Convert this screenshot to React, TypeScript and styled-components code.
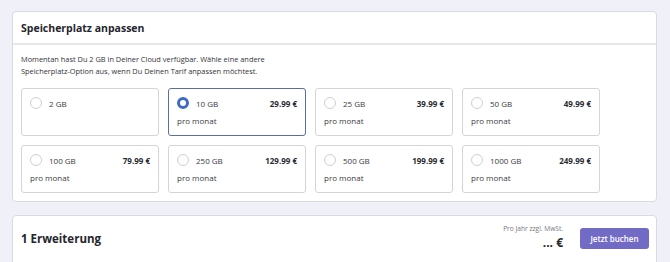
import React, { useState } from 'react';
import styled, { createGlobalStyle } from 'styled-components';

const GlobalStyle = createGlobalStyle`
  body {
    margin: 0;
    background: #f0f0f8;
    font-family: 'Open Sans', 'Liberation Sans', sans-serif;
    color: #2b2b33;
  }
`;

const Page = styled.div`
  padding: 11px 13px 0 12px;
  display: flex;
  flex-direction: column;
  gap: 13px;
`;

const Card = styled.div`
  background: #fff;
  border: 1px solid #d9d9e3;
  border-radius: 4px;
`;

const CardHeader = styled.div`
  height: 31px;
  display: flex;
  align-items: center;
  padding: 0 8px;
  border-bottom: 2px solid #e7e7ec;
`;

const Title = styled.h2`
  margin: 0;
  font-size: 10.5px;
  font-weight: 700;
  color: #25252d;
`;

const CardBody = styled.div`
  padding: 8px 8px 8px;
`;

const Description = styled.p`
  margin: 0 0 11px;
  font-size: 7.4px;
  line-height: 12px;
  color: #34343c;
`;

const OptionGrid = styled.div`
  display: grid;
  grid-template-columns: repeat(4, 138px);
  gap: 9px;
`;

const Option = styled.label<{ $active: boolean }>`
  height: 48px;
  box-sizing: border-box;
  padding: 8px 8px;
  border: 1px solid ${(p) => (p.$active ? '#5a6f9c' : '#d4d4dc')};
  border-radius: 3px;
  display: flex;
  flex-direction: column;
  gap: 6px;
  cursor: pointer;
`;

const OptionRow = styled.div`
  display: flex;
  align-items: center;
  height: 12px;
`;

const Radio = styled.span<{ $active: boolean }>`
  width: 12px;
  height: 12px;
  box-sizing: border-box;
  border-radius: 50%;
  border: ${(p) => (p.$active ? '3px solid #3f6ac4' : '1px solid #cfcfd6')};
  background: #fff;
  margin-right: 7px;
  flex: none;
`;

const Size = styled.span`
  font-size: 8px;
  color: #3a3a42;
  flex: 1;
`;

const Price = styled.span`
  font-size: 8px;
  font-weight: 700;
  color: #2b2b33;
`;

const PerMonth = styled.span`
  font-size: 8px;
  color: #3a3a42;
`;

const Footer = styled(Card)`
  display: flex;
  align-items: center;
  padding: 0 7px 12px 8px;
  height: 45px;
`;

const FooterTitle = styled.div`
  font-size: 11.5px;
  font-weight: 700;
  color: #25252d;
  flex: 1;
`;

const Total = styled.div`
  display: flex;
  flex-direction: column;
  align-items: flex-end;
  gap: 3px;
  margin-right: 17px;
  margin-top: -4px;
`;

const TotalNote = styled.span`
  font-size: 6.6px;
  line-height: 9px;
  color: #77777f;
`;

const TotalValue = styled.span`
  font-size: 12px;
  font-weight: 700;
  color: #25252d;
  line-height: 14px;
`;

const BookButton = styled.button`
  width: 69px;
  height: 21px;
  border: none;
  border-radius: 3px;
  background: #726bc6;
  color: #fff;
  font-family: inherit;
  font-size: 8px;
  font-weight: 600;
  cursor: pointer;
`;

const options = [
  { size: '2 GB', price: '' },
  { size: '10 GB', price: '29.99 €' },
  { size: '25 GB', price: '39.99 €' },
  { size: '50 GB', price: '49.99 €' },
  { size: '100 GB', price: '79.99 €' },
  { size: '250 GB', price: '129.99 €' },
  { size: '500 GB', price: '199.99 €' },
  { size: '1000 GB', price: '249.99 €' },
];

export default function App() {
  const [selected, setSelected] = useState('10 GB');

  return (
    <Page>
      <GlobalStyle />
      <Card>
        <CardHeader>
          <Title>Speicherplatz anpassen</Title>
        </CardHeader>
        <CardBody>
          <Description>
            Momentan hast Du 2 GB in Deiner Cloud verfügbar. Wähle eine andere
            <br />
            Speicherplatz-Option aus, wenn Du Deinen Tarif anpassen möchtest.
          </Description>
          <OptionGrid>
            {options.map((o) => {
              const active = o.size === selected;
              return (
                <Option
                  key={o.size}
                  $active={active}
                  onClick={() => setSelected(o.size)}
                >
                  <OptionRow>
                    <Radio $active={active} />
                    <Size>{o.size}</Size>
                    {o.price && <Price>{o.price}</Price>}
                  </OptionRow>
                  {o.price && <PerMonth>pro monat</PerMonth>}
                </Option>
              );
            })}
          </OptionGrid>
        </CardBody>
      </Card>
      <Footer>
        <FooterTitle>1 Erweiterung</FooterTitle>
        <Total>
          <TotalNote>Pro Jahr zzgl. MwSt.</TotalNote>
          <TotalValue>... €</TotalValue>
        </Total>
        <BookButton>Jetzt buchen</BookButton>
      </Footer>
    </Page>
  );
}
